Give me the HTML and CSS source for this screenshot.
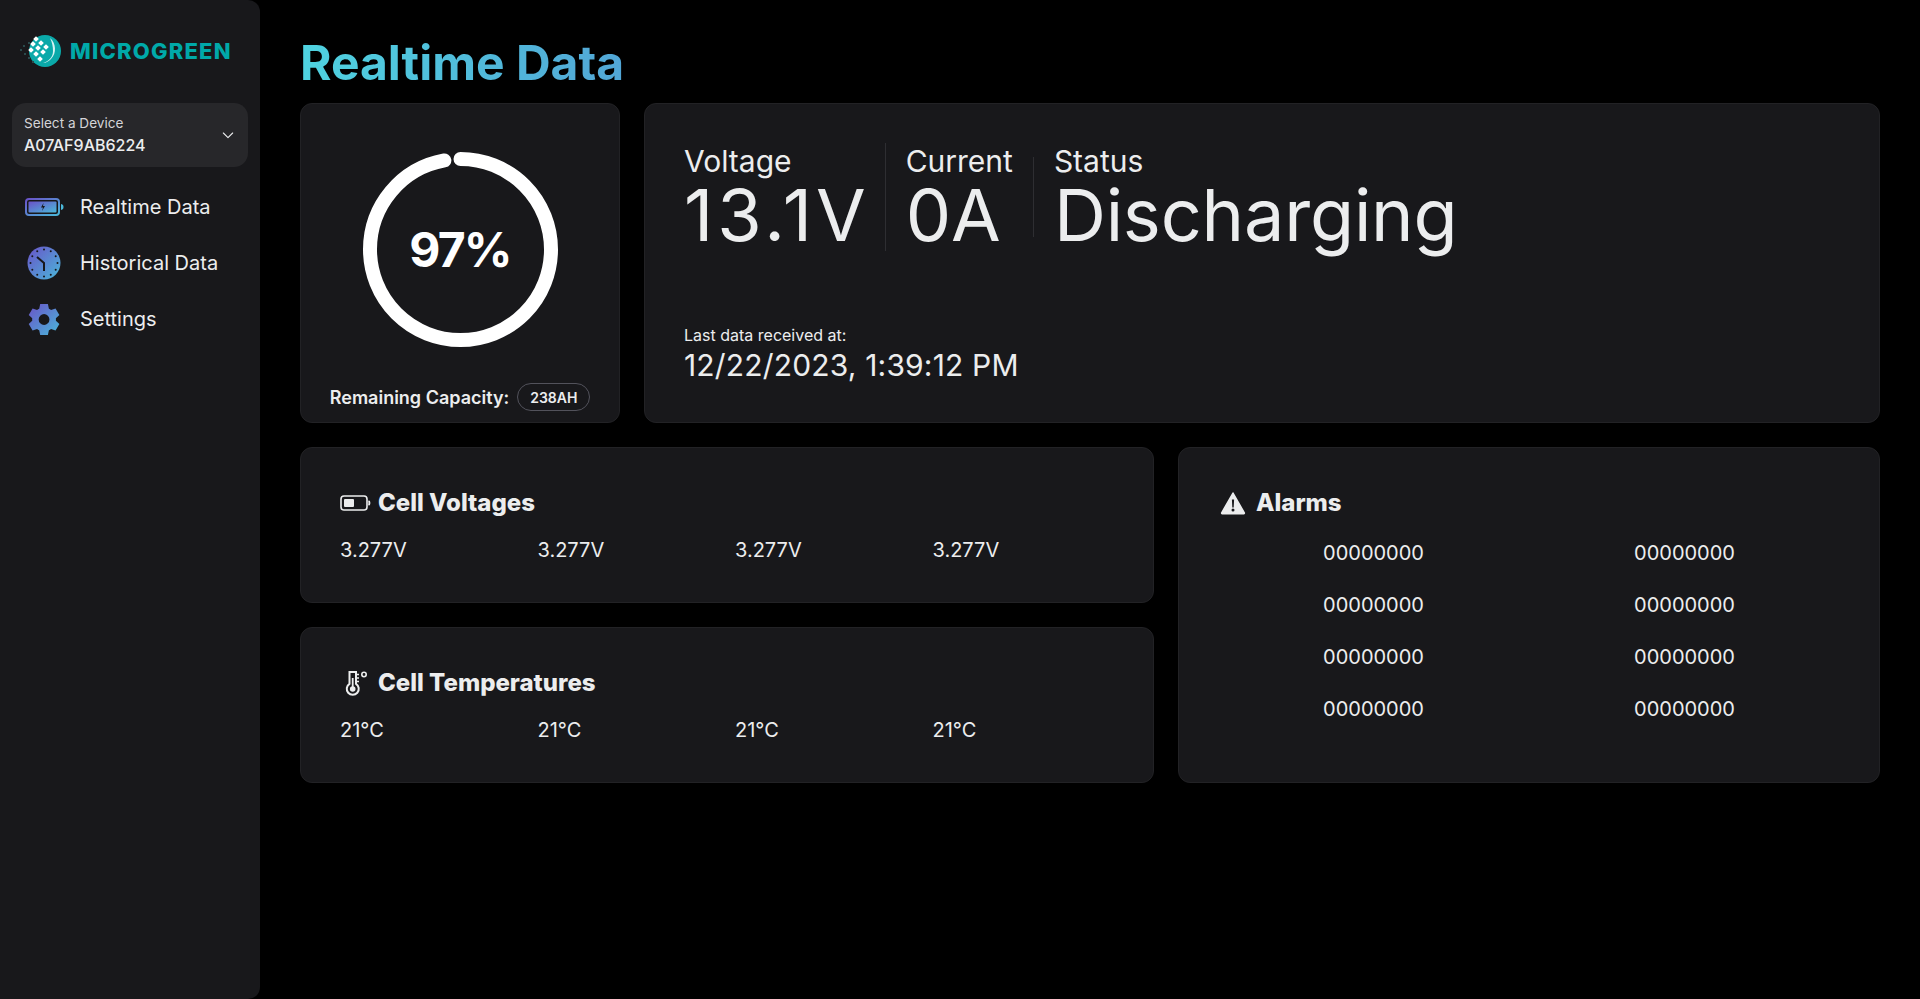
FILE: index.html
```html
<!DOCTYPE html>
<html lang="en">
<head>
    <meta charset="UTF-8">
    <meta name="viewport" content="width=device-width, initial-scale=1.0">
    <title>Realtime Data</title>
    <link rel="stylesheet" href="styles.css">
</head>
<body>

<aside class="sidebar">
    <div class="logo">
        <svg class="logo-mark" viewBox="0 0 44 36" width="44" height="36">
            <circle cx="27" cy="18" r="16" fill="#0aa9a9"/>
            <path d="M32 5c6 5 7 15 1 21-2 2-5 4-8 4 6-2 10-6 10-12 0-5-1-9-3-13z" fill="#d8f3f3"/>
            <g fill="#2a4a4c">
                <rect x="2" y="16" width="2" height="2"/>
                <rect x="5" y="12" width="2" height="2"/>
                <rect x="6" y="20" width="2" height="2"/>
                <rect x="10" y="9" width="2" height="2"/>
                <rect x="10" y="24" width="2" height="2"/>
                <rect x="14" y="28" width="2" height="2"/>
            </g>
            <g fill="#fff">
                <rect x="16" y="4" width="4" height="4" transform="rotate(45 18 6)"/>
                <rect x="21" y="8" width="4" height="4" transform="rotate(45 23 10)"/>
                <rect x="26" y="12" width="4" height="4" transform="rotate(45 28 14)"/>
                <rect x="13" y="9" width="4" height="4" transform="rotate(45 15 11)"/>
                <rect x="18" y="13" width="4" height="4" transform="rotate(45 20 15)"/>
                <rect x="23" y="17" width="4" height="4" transform="rotate(45 25 19)"/>
                <rect x="11" y="15" width="4" height="4" transform="rotate(45 13 17)"/>
                <rect x="16" y="19" width="4" height="4" transform="rotate(45 18 21)"/>
                <rect x="20" y="24" width="4" height="4" transform="rotate(45 22 26)"/>
            </g>
        </svg>
        <span class="logo-text">MICROGREEN</span>
    </div>

    <div class="device-select">
        <div>
            <div class="device-label">Select a Device</div>
            <div class="device-value">A07AF9AB6224</div>
        </div>
        <svg class="chevron" viewBox="0 0 24 24" width="16" height="16" fill="none" stroke="#ecedee" stroke-width="1.6" stroke-linecap="round" stroke-linejoin="round">
            <path d="M5 9l7 7 7-7"/>
        </svg>
    </div>

    <nav class="nav">
        <a class="nav-item" href="#">
            <svg class="nav-icon" viewBox="0 0 40 20" width="40" height="20">
                <defs>
                    <linearGradient id="gradBattery" x1="0" y1="0" x2="1" y2="1">
                        <stop offset="0" stop-color="#6a52c8"/>
                        <stop offset="1" stop-color="#4ab8da"/>
                    </linearGradient>
                </defs>
                <rect x="1" y="2" width="33" height="16" rx="3" fill="none" stroke="url(#gradBattery)" stroke-width="2"/>
                <rect x="3.500" y="4.500" width="28" height="11" rx="1" fill="url(#gradBattery)"/>
                <path d="M36 7c2 .3 2.500 1.500 2.500 3s-.5 2.700-2.500 3z" fill="#4ab8da"/>
                <path d="M18.500 6l-2.500 4.500h2l-1 3.500 3-5h-2z" fill="#18181b"/>
            </svg>
            <span>Realtime Data</span>
        </a>
        <a class="nav-item" href="#">
            <svg class="nav-icon" viewBox="1 0 40 34" width="40" height="34">
                <defs>
                    <linearGradient id="gradClock" x1="0" y1="0" x2="1" y2="1">
                        <stop offset="0" stop-color="#6a52c8"/>
                        <stop offset="1" stop-color="#4ab8da"/>
                    </linearGradient>
                </defs>
                <circle cx="20" cy="17" r="16.500" fill="url(#gradClock)"/>
                <g fill="#18181b">
                    <circle cx="20" cy="3.500" r="1"/>
                    <circle cx="26.750" cy="5.300" r="1"/>
                    <circle cx="31.700" cy="10.250" r="1"/>
                    <circle cx="33.500" cy="17" r="1"/>
                    <circle cx="31.700" cy="23.750" r="1"/>
                    <circle cx="26.750" cy="28.700" r="1"/>
                    <circle cx="20" cy="30.500" r="1"/>
                    <circle cx="13.250" cy="28.700" r="1"/>
                    <circle cx="8.300" cy="23.750" r="1"/>
                    <circle cx="6.500" cy="17" r="1"/>
                    <circle cx="8.300" cy="10.250" r="1"/>
                    <circle cx="13.250" cy="5.300" r="1"/>
                </g>
                <path d="M13 11l7 6v8" fill="none" stroke="#18181b" stroke-width="2"/>
            </svg>
            <span>Historical Data</span>
        </a>
        <a class="nav-item" href="#">
            <svg class="nav-icon" viewBox="-2.100 0 29.600 24" width="40" height="33">
                <defs>
                    <linearGradient id="gradGear" x1="0" y1="0" x2="1" y2="1">
                        <stop offset="0" stop-color="#6a52c8"/>
                        <stop offset="1" stop-color="#4ab8da"/>
                    </linearGradient>
                </defs>
                <path fill="url(#gradGear)" fill-rule="evenodd" d="M9.150 .55L14.850 .55L15.580 3.960A8.800 8.800 0 0 1 17.170 4.880L20.490 3.800L23.340 8.750L20.750 11.080A8.800 8.800 0 0 1 20.750 12.920L23.340 15.250L20.490 20.200L17.170 19.120A8.800 8.800 0 0 1 15.580 20.040L14.850 23.450L9.150 23.450L8.420 20.040A8.800 8.800 0 0 1 6.830 19.120L3.510 20.200L.66 15.250L3.250 12.920A8.800 8.800 0 0 1 3.250 11.080L.66 8.750L3.510 3.800L6.830 4.880A8.800 8.800 0 0 1 8.420 3.960ZM12 8a4 4 0 1 0 0 8a4 4 0 1 0 0-8Z"/>
            </svg>
            <span>Settings</span>
        </a>
    </nav>
</aside>

<main class="main">
    <h1 class="page-title">Realtime Data</h1>

    <section class="top-row">
        <div class="card gauge-card">
            <div class="gauge">
                <svg class="gauge-ring" viewBox="0 0 195 195" width="195" height="195">
                    <circle cx="97.500" cy="97.500" r="90.500" fill="none" stroke="#fff" stroke-width="14" stroke-linecap="round" stroke-dasharray="551.500 568.600"/>
                </svg>
                <span class="gauge-value">97%</span>
            </div>
            <div class="capacity">
                <span>Remaining Capacity:</span>
                <span class="chip">238AH</span>
            </div>
        </div>

        <div class="card readings-card">
            <div class="readings">
                <div class="reading">
                    <div class="reading-label">Voltage</div>
                    <div class="reading-value voltage-value">13.1V</div>
                </div>
                <div class="divider"></div>
                <div class="reading">
                    <div class="reading-label">Current</div>
                    <div class="reading-value">0A</div>
                </div>
                <div class="divider divider-short"></div>
                <div class="reading">
                    <div class="reading-label">Status</div>
                    <div class="reading-value status-value">Discharging</div>
                </div>
            </div>
            <div>
                <div class="last-label">Last data received at:</div>
                <div class="last-value">12/22/2023, 1:39:12 PM</div>
            </div>
        </div>
    </section>

    <section class="bottom-row">
        <div class="cells">
            <div class="card cell-card">
                <h2 class="card-title">
                    <svg class="title-icon" viewBox="0 0 32 20" width="32" height="20" fill="none" stroke="#ecedee" stroke-width="1.600">
                        <rect x="1" y="3" width="26" height="14" rx="3"/>
                        <rect x="4" y="6" width="10" height="8" rx="1" fill="#ecedee" stroke="none"/>
                        <path d="M28.500 8c1.500 .3 1.500 3.700 0 4" fill="#ecedee"/>
                    </svg>
                    <span>Cell Voltages</span>
                </h2>
                <div class="cell-values">
                    <span>3.277V</span>
                    <span>3.277V</span>
                    <span>3.277V</span>
                    <span>3.277V</span>
                </div>
            </div>
            <div class="card cell-card">
                <h2 class="card-title">
                    <svg class="title-icon" viewBox="0 0 32 26" width="32" height="26" fill="none" stroke="#ecedee" stroke-width="2">
                        <path d="M9.500 2h6.500v11.800a6 6 0 1 1-6.500 0z"/>
                        <circle cx="12.700" cy="19" r="2.800" fill="#ecedee" stroke="none"/>
                        <path d="M12.700 8v10" stroke-width="1.800"/>
                        <path d="M16 4.500h3M16 8h3M16 11.500h3" stroke-width="1.500"/>
                        <circle cx="24" cy="4.500" r="2.200" stroke-width="1.600"/>
                    </svg>
                    <span>Cell Temperatures</span>
                </h2>
                <div class="cell-values">
                    <span>21°C</span>
                    <span>21°C</span>
                    <span>21°C</span>
                    <span>21°C</span>
                </div>
            </div>
        </div>

        <div class="card alarm-card">
            <h2 class="card-title">
                <svg class="title-icon" viewBox="0 0 32 24" width="32" height="24">
                    <path fill="#ecedee" stroke="#ecedee" stroke-width="1.500" stroke-linejoin="round" fill-rule="evenodd" d="M15 2L26.300 21.800a.6 .6 0 0 1-.5 .9H4.200a.6 .6 0 0 1-.5-.9L15 2Z"/>
                    <path fill="#18181b" d="M13.900 8.500l.4 8h1.400l.4-8ZM15 17.500a1.500 1.500 0 1 0 0 3a1.500 1.500 0 1 0 0-3Z"/>
                </svg>
                <span>Alarms</span>
            </h2>
            <div class="alarm-values">
                <span>00000000</span>
                <span>00000000</span>
                <span>00000000</span>
                <span>00000000</span>
                <span>00000000</span>
                <span>00000000</span>
                <span>00000000</span>
                <span>00000000</span>
            </div>
        </div>
    </section>
</main>

</body>
</html>
```

FILE: styles.css
```css
* {
    box-sizing: border-box;
}
body {
    margin: 0;
    min-height: 100vh;
    display: flex;
    background-color: #000;
    color: #ecedee;
    font-family: Inter, "Liberation Sans", sans-serif;
}

/* sidebar */
.sidebar {
    flex: 0 0 260px;
    height: 999px;
    padding: 0 12px;
    background-color: #18181b;
    border-radius: 0 12px 12px 0;
}
.logo {
    display: flex;
    align-items: center;
    gap: 8px;
    height: 103px;
    padding: 0 0 2px 6px;
}
.logo-text {
    font-size: 22px;
    font-weight: 800;
    color: #00a9a9;
    letter-spacing: 1.2px;
}
.device-select {
    display: flex;
    align-items: center;
    justify-content: space-between;
    height: 64px;
    padding: 0 12px;
    background-color: #27272a;
    border-radius: 14px;
}
.device-label {
    font-size: 13.6px;
    line-height: 19px;
    color: #d4d4d8;
}
.device-value {
    font-size: 16px;
    font-weight: 500;
    line-height: 24px;
}
.nav {
    display: flex;
    flex-direction: column;
    margin-top: 12px;
}
.nav-item {
    display: flex;
    align-items: center;
    gap: 15px;
    height: 56px;
    padding-left: 13px;
    color: #ecedee;
    font-size: 20px;
    text-decoration: none;
}
.nav-icon {
    flex: none;
}

/* main */
.main {
    flex: 1;
    min-width: 0;
    padding: 39px 40px 0;
}
.page-title {
    margin: 0 0 16px;
    font-size: 48px;
    line-height: 48px;
    font-weight: 700;
    background: linear-gradient(to right, #4fd3e0, #52a6d6);
    -webkit-background-clip: text;
    background-clip: text;
    color: transparent;
    width: fit-content;
}
.card {
    background-color: #18181b;
    border: 1px solid #222225;
    border-radius: 12px;
}
.top-row {
    display: flex;
    gap: 24px;
    height: 320px;
}
.gauge-card {
    flex: 0 0 320px;
    display: flex;
    flex-direction: column;
    align-items: center;
    padding-top: 48px;
}
.gauge {
    position: relative;
    width: 195px;
    height: 195px;
}
.gauge-ring {
    display: block;
    transform: rotate(-90deg);
}
.gauge-value {
    position: absolute;
    inset: 0;
    display: flex;
    align-items: center;
    justify-content: center;
    font-size: 48px;
    font-weight: 700;
    letter-spacing: -1.8px;
    color: #fff;
}
.capacity {
    display: flex;
    align-items: center;
    gap: 8px;
    margin-top: 36px;
    font-size: 18px;
    font-weight: 600;
    white-space: nowrap;
}
.chip {
    display: flex;
    align-items: center;
    justify-content: center;
    width: 73px;
    height: 28px;
    border: 1px solid #52525b;
    border-radius: 14px;
    font-size: 14px;
}
.readings-card {
    flex: 1;
    display: flex;
    flex-direction: column;
    justify-content: space-between;
    padding: 39px;
}
.readings {
    display: flex;
    align-items: center;
    gap: 20px;
}
.reading-label {
    font-size: 30px;
    line-height: 36px;
}
.reading-value {
    font-size: 72px;
    line-height: 72px;
}
.voltage-value {
    letter-spacing: 4px;
    margin-right: -5px;
}
.status-value {
    letter-spacing: -.2px;
}
.divider {
    width: 1px;
    height: 108px;
    background-color: #2e2e32;
}
.divider-short {
    height: 80px;
}
.last-label {
    font-size: 16px;
    line-height: 24px;
}
.last-value {
    font-size: 30px;
    line-height: 36px;
    letter-spacing: .17px;
}
.bottom-row {
    display: flex;
    gap: 24px;
    margin-top: 24px;
}
.cells {
    flex: 0 0 854px;
    min-width: 0;
    display: flex;
    flex-direction: column;
    gap: 24px;
}
.cell-card {
    height: 156px;
    padding: 39px;
}
.card-title {
    display: flex;
    align-items: center;
    gap: 6px;
    margin: 0;
    height: 32px;
    font-size: 24px;
    line-height: 32px;
    font-weight: 800;
}
.title-icon {
    flex: none;
}
.cell-values {
    display: grid;
    grid-template-columns: repeat(4, 197.5px);
    margin-top: 17px;
    font-size: 20px;
    line-height: 28px;
}
.alarm-card {
    flex: 1;
    height: 336px;
    padding: 39px;
}
.alarm-values {
    display: grid;
    grid-template-columns: 1fr 1fr;
    row-gap: 24px;
    margin-top: 20px;
    font-size: 20px;
    line-height: 28px;
    text-align: center;
}
```
